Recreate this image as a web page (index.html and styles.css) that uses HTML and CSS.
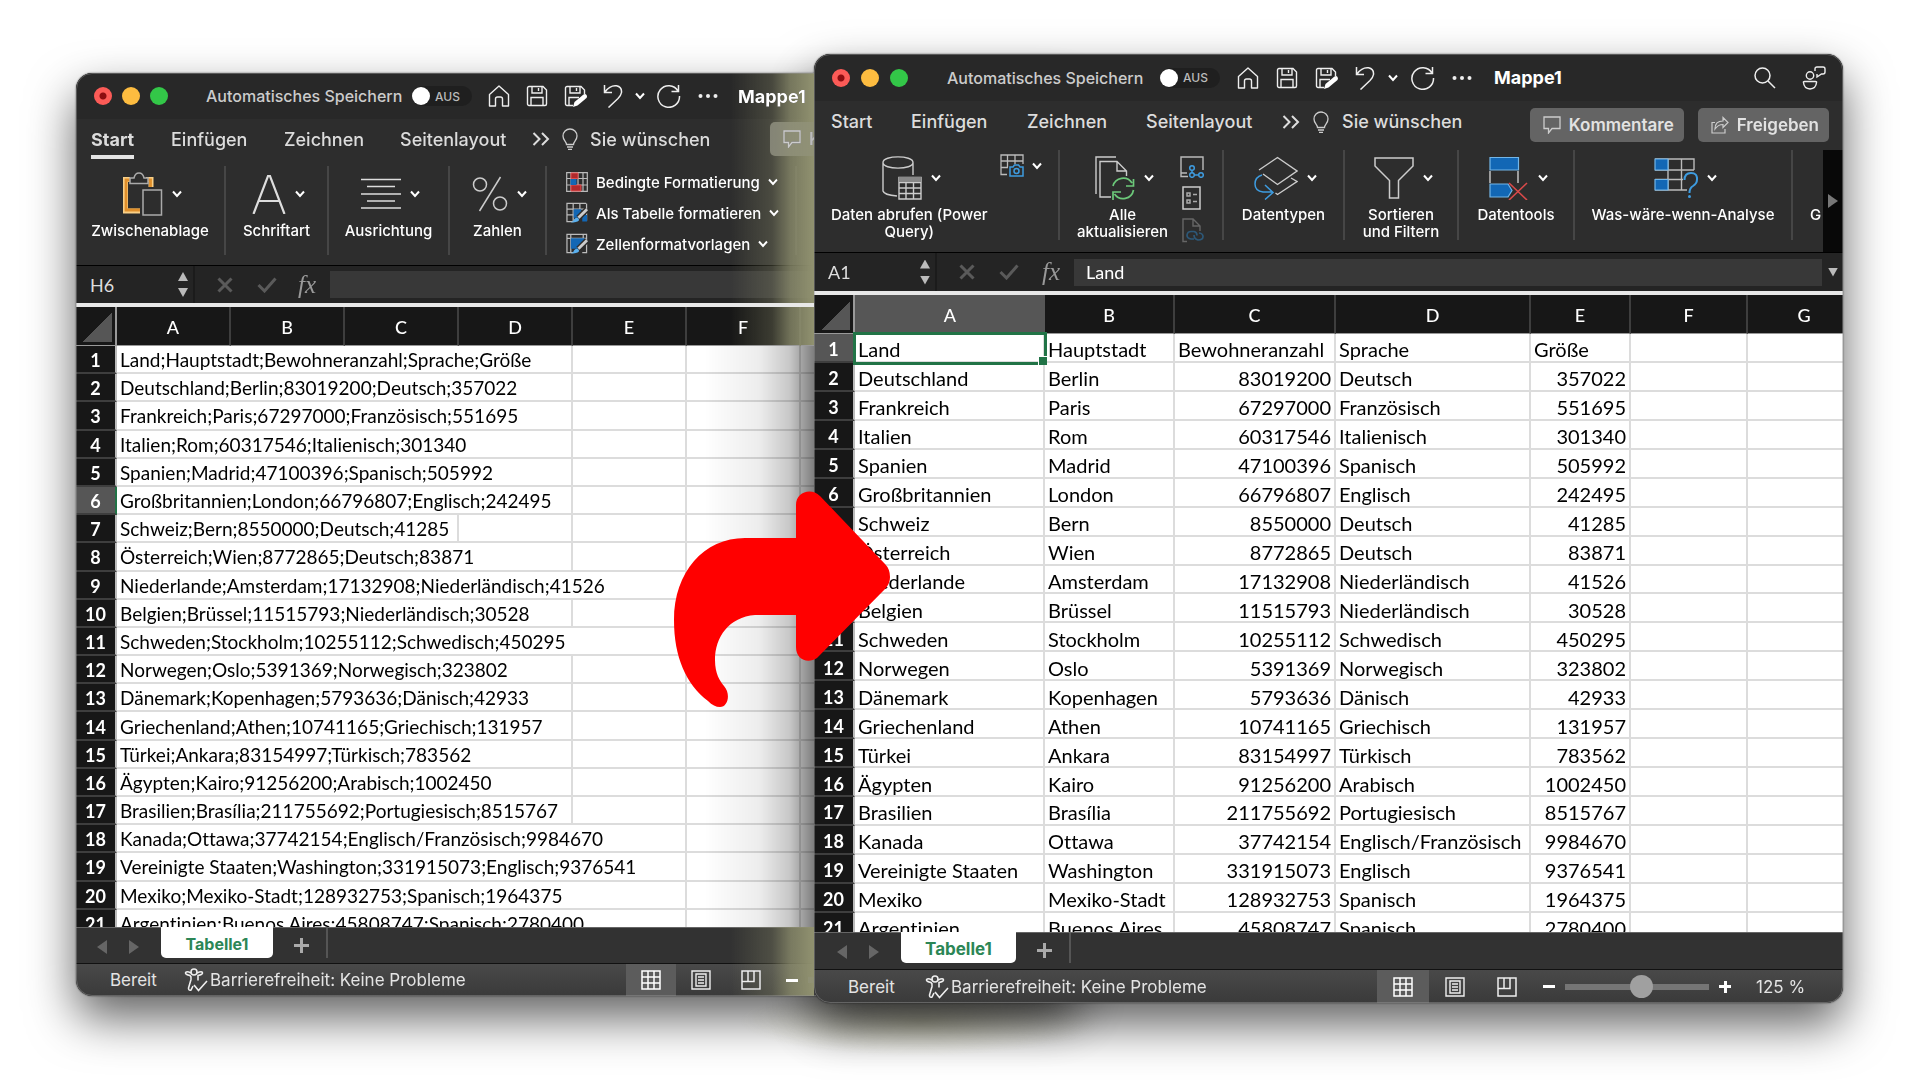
FILE: index.html
```html
<!DOCTYPE html>
<html lang="de">
<head>
<meta charset="utf-8">
<title>Mappe1</title>
<link rel="stylesheet" href="styles.css">
</head>
<body>
<svg class="sprite" aria-hidden="true">
  <symbol id="chevron" viewBox="0 0 10 8"><path d="M1 1.5l4 4.5 4-4.5" fill="none" stroke="#fff" stroke-width="2"/></symbol>
  <symbol id="home" viewBox="0 0 22 22"><path d="M1.500 9.500L11 1l9.500 8.500V21h-6v-7a2 2 0 0 0-2-2h-3a2 2 0 0 0-2 2v7h-6z" fill="none" stroke="#eee" stroke-width="1.400" stroke-linejoin="round"/></symbol>
  <symbol id="save" viewBox="0 0 22 22"><path d="M3 1.500h14l3.500 3.500v14a1.500 1.500 0 0 1-1.500 1.500H3A1.500 1.500 0 0 1 1.500 19V3A1.500 1.500 0 0 1 3 1.500zM6 1.500V8h10V1.500M5 20.500V12.500h12v8M12.500 3v3" fill="none" stroke="#eee" stroke-width="1.400"/></symbol>
  <symbol id="saveas" viewBox="0 0 24 22"><path d="M9 20.500H3A1.500 1.500 0 0 1 1.500 19V3A1.500 1.500 0 0 1 3 1.500h14L20.500 5v4M6 1.500V8h10V1.500M5 20.500V12.500h10M12.500 3v3" fill="none" stroke="#eee" stroke-width="1.400"/><path d="M9 22l1.500-5 9-7.500q2-1 3 .5t0 3l-9 7.500z" fill="#fff"/></symbol>
  <symbol id="undo" viewBox="0 0 20 24"><path d="M1.500 1v7.500H9M2 8Q7 1 13.500 1.800 19 3 18.500 8.500q-.5 3-3.500 6L5.500 23.500" fill="none" stroke="#eee" stroke-width="1.500"/></symbol>
  <symbol id="redo" viewBox="0 0 24 24"><path d="M21.500 1v6.500H14.500M21 7A10.800 10.800 0 1 0 22.500 12" fill="none" stroke="#eee" stroke-width="1.500"/></symbol>
  <symbol id="dots" viewBox="0 0 20 6"><g fill="#eee"><circle cx="2.500" cy="3" r="2"/><circle cx="10" cy="3" r="2"/><circle cx="17.500" cy="3" r="2"/></g></symbol>
  <symbol id="search" viewBox="0 0 22 22"><circle cx="8.500" cy="8.500" r="7.500" fill="none" stroke="#eee" stroke-width="1.500"/><path d="M14 14l7 7" stroke="#eee" stroke-width="1.500"/></symbol>
  <symbol id="people" viewBox="0 0 24 24"><g fill="none" stroke="#eee" stroke-width="1.400"><circle cx="8" cy="9.500" r="3.700"/><path d="M1.500 16.500q-.5-1 1-1h11q1.500 0 1 1-.5 6-6.500 6.500-6-.5-6.500-6.500zM13 5V3q0-2 2-2h6q2 0 2 2v3q0 2-2 2h-1.500L15 11V8"/></g></symbol>
  <symbol id="more" viewBox="0 0 18 14"><path d="M1.500 1L7.500 7l-6 6M10 1l6 6-6 6" fill="none" stroke="#ddd" stroke-width="2"/></symbol>
  <symbol id="bulb" viewBox="0 0 16 22"><path d="M4.500 16.500c0-3-3.500-4-3.500-8.500a7 7 0 0 1 14 0c0 4.500-3.500 5.500-3.500 8.500zM5 19h6M6 21.300h4" fill="none" stroke="#ccc" stroke-width="1.300"/></symbol>
  <symbol id="comment" viewBox="0 0 18 18"><path d="M1 1h16v11.500H9L5.500 17v-4.500H1z" fill="none" stroke="#ccc" stroke-width="1.300"/></symbol>
  <symbol id="share" viewBox="0 0 18 18"><path d="M4 6.500H1V17h13v-4M4 13q0-8 8-8V1.500l5 5-5 5V8.500q-5 0-8 4.500z" fill="none" stroke="#ccc" stroke-width="1.200"/></symbol>
  <symbol id="paste" viewBox="0 0 40 44"><path d="M7 7.500H2.500V39H17M23 7.500h5V15" fill="none" stroke="#f9cf86" stroke-width="5"/><path d="M7 8H3V38H17M23 8h4.500V15" fill="none" stroke="#e08f2b" stroke-width="2.800"/><path d="M7 11.500V6h4q1-5 5-5t5 5h4v5.500zM20 18h18.500v25H20z" fill="#2d2d2d" stroke="#aaa" stroke-width="1.500"/></symbol>
  <symbol id="font" viewBox="0 0 34 40"><path d="M1.500 40L16 2h2L32.500 40M6 27h22" fill="none" stroke="#ddd" stroke-width="2.200"/></symbol>
  <symbol id="align" viewBox="0 0 40 32"><path d="M0 1.500h40M6 8.500h28M0 16h40M6 23h28M0 30h40" stroke="#ddd" stroke-width="1.500"/></symbol>
  <symbol id="percent" viewBox="0 0 36 36"><g fill="none" stroke="#ccc" stroke-width="1.500"><circle cx="8" cy="8.500" r="6.500"/><circle cx="28" cy="27.500" r="6.500"/><path d="M28.500 1L7.500 35"/></g></symbol>
  <symbol id="cond" viewBox="0 0 22 20"><path d="M.7.700h20.600v18.600H.7zM.7 6.500h20.600M.7 13h20.600M5 .7v18.600M12 .7v18.600M17 .7v18.600" fill="none" stroke="#bbb" stroke-width="1.200"/><path d="M5 1h7v5.500H5zM5 13h10v6H5z" fill="#b0292c" stroke="#e05050"/><path d="M4.500 7h6v6h-6z" fill="#1267b5"/></symbol>
  <symbol id="tablefmt" viewBox="0 0 23 22"><path d="M21 1H1v19h7M1 7h20M1 13h9M7.500 1v19M14.500 1v6M21.500 1v18" fill="none" stroke="#bbb" stroke-width="1.300"/><path d="M8 7h8v9H8zM17 13h5v7h-5z" fill="#1267b5"/><path d="M22 7l-9 9" stroke="#2d2d2d" stroke-width="6"/><path d="M22 7l-9 9" stroke="#ccc" stroke-width="3"/><path d="M5 21q3-1 3.500-3.500 2-3 5-.5 1.500 4-8.500 4z" fill="#5ab0ee"/></symbol>
  <symbol id="cellfmt" viewBox="0 0 23 22"><path d="M8 20H1V1h20.500v19H17M1 5h20M5 1v19M18 1v4" fill="none" stroke="#bbb" stroke-width="1.300"/><path d="M5 5h15L13 16H5z" fill="#1267b5"/><path d="M22 7l-9 9" stroke="#2d2d2d" stroke-width="6"/><path d="M22 7l-9 9" stroke="#ccc" stroke-width="3"/><path d="M5 21q3-1 3.500-3.500 2-3 5-.5 1.500 4-8.500 4z" fill="#5ab0ee"/></symbol>
  <symbol id="database" viewBox="0 0 40 44"><path d="M31 19V6.500M1 6.500V35q1 4 14 5M1 6.500C1-1 31-1 31 6.500S1 14 1 6.500z" fill="none" stroke="#ccc" stroke-width="1.400"/><path d="M17 21.500h22V43H17zM17 26.500h22M17 32h22M17 37.500h22M24 26v17M31.500 26v17" fill="none" stroke="#ccc" stroke-width="1.400"/><path d="M17 21h22v5H17z" fill="#888"/></symbol>
  <symbol id="camera" viewBox="0 0 24 23"><path d="M7 20.500H1V1h22v9M1 7h22M1 13.500h7M7.500 1v12M15 1v9" fill="none" stroke="#bbb" stroke-width="1.300"/><path d="M10 13h3l1.500-2h4l1.500 2h3v9H10z" fill="#2d2d2d" stroke="#3e9ce0" stroke-width="1.500"/><circle cx="16.500" cy="17" r="2.500" fill="none" stroke="#3e9ce0" stroke-width="1.500"/></symbol>
  <symbol id="refresh" viewBox="0 0 40 45"><path d="M1 38V1h20M16 41H5V5.500h17L31.500 15v5M22 5.500V15h9.500" fill="none" stroke="#ccc" stroke-width="1.400"/><path d="M18 30a10.500 10.500 0 0 1 19-3M38.500 23v7H31M38.500 34a10.500 10.500 0 0 1-19 4M18 44v-8h8" fill="none" stroke="#6cc97a" stroke-width="1.700"/></symbol>
  <symbol id="flow" viewBox="0 0 24 22"><path d="M8 20.500H1V1h22v13M1 17h6" fill="none" stroke="#bbb" stroke-width="1.400"/><g fill="none" stroke="#3e9ce0" stroke-width="1.500"><circle cx="12" cy="12" r="2.300"/><circle cx="12" cy="19" r="2.300"/><circle cx="21" cy="19" r="2.300"/><path d="M12 14v3M14 19h4.500"/></g></symbol>
  <symbol id="props" viewBox="0 0 24 24"><path d="M3 1h17v22H3z" fill="none" stroke="#ccc" stroke-width="1.500"/><path d="M7 7h3v3H7zM7 14h3v3H7zM13 8.500h4M13 15.500h4" fill="none" stroke="#aaa" stroke-width="1.500"/></symbol>
  <symbol id="linkdoc" viewBox="0 0 24 25"><path d="M7 23.500H3V1h10l7 7v5M13 1v7h7" fill="none" stroke="#666" stroke-width="1.400"/><path d="M14 21h-3q-4-.5-4-4 .5-3.500 4-3.500h3q3 .5 3 4M14 17q0 4 4 5 5 0 5-3.500 0-3-4-3.500M14 17" fill="none" stroke="#2d5878" stroke-width="1.700"/></symbol>
  <symbol id="types" viewBox="0 0 44 44"><path d="M5 14L23.500 1.500 43 15 23.500 28.500 9 18M37 22l6 3.500L23.500 38.500l-2-1.500" fill="none" stroke="#ccc" stroke-width="1.400"/><path d="M8 19Q1 21 1 28t8 8h9M11 29l8 7.500-8 7" fill="none" stroke="#3e9ce0" stroke-width="1.500"/></symbol>
  <symbol id="filter" viewBox="0 0 40 42"><path d="M1 1h38v8L24.500 23.500V41h-9V23.500L1 9z" fill="none" stroke="#ccc" stroke-width="1.500"/></symbol>
  <symbol id="tools" viewBox="0 0 40 44"><path d="M1 15v12M29 15v12" stroke="#ccc" stroke-width="1.400"/><path d="M1 1.500h28.500V14H1zM1 28h18l4 6.500L19 41H1z" fill="#1267b5" stroke="#73b6e8" stroke-width="1.200"/><path d="M20 27l18 17M38 27L20 44" stroke="#d94a4a" stroke-width="1.600"/></symbol>
  <symbol id="whatif" viewBox="0 0 44 40"><path d="M1 1h39v11M1 12h39M1 21.500h28M1 32h32M14 1v31M27.500 1v31" fill="none" stroke="#bbb" stroke-width="1.400"/><path d="M1 1h13v11H1zM1 21.500h13V32H1z" fill="#1267b5" stroke="#73b6e8" stroke-width="1.200"/><path d="M30.500 22q0-7 6.500-7t6 6.500q0 4-4 6.500-3.500 2-3.500 7" fill="none" stroke="#3e9ce0" stroke-width="2"/><circle cx="35.500" cy="38.500" r="1.500" fill="#3e9ce0"/></symbol>
  <symbol id="cancel" viewBox="0 0 16 16"><path d="M1.500 1.500l13 13M14.500 1.500l-13 13" stroke="#5a5a5a" stroke-width="3"/></symbol>
  <symbol id="check" viewBox="0 0 20 16"><path d="M1.500 8l6 6L18.500 1.500" fill="none" stroke="#5a5a5a" stroke-width="3"/></symbol>
  <symbol id="access" viewBox="0 0 24 24"><g fill="none" stroke="#eee" stroke-width="1.600"><circle cx="10" cy="4" r="3"/><path d="M7 5Q2 2.500 1.500 5q0 1.500 4.500 2.500 1.500 1 1 4L4.500 20q0 3 2.500 2l2-4M13 5q5.500-2.500 5.500 0 0 1.500-4.500 2.500v5M10 17l4.500 5.500L23 13"/></g></symbol>
  <symbol id="vgrid" viewBox="0 0 20 20"><path d="M1 1h18v18H1zM1 7h18M1 13h18M7 1v18M13 1v18" fill="none" stroke="#fff" stroke-width="1.500"/></symbol>
  <symbol id="vpage" viewBox="0 0 20 20"><path d="M1 1h18v18H1zM5 4h10v12H5zM7 7h6M7 10h6M7 13h6" fill="none" stroke="#eee" stroke-width="1.400"/></symbol>
  <symbol id="vbreak" viewBox="0 0 20 20"><path d="M1 1h18v18H1zM1 11.500h12V1M7 1v10.500" fill="none" stroke="#eee" stroke-width="1.500"/></symbol>
</svg>

<main class="desktop">
  <section class="window window-source" aria-label="Mappe1, CSV-Text">
    <div class="frame">
      <header class="titlebar">
        <div class="lights"><i class="red"></i><i class="yellow"></i><i class="green"></i></div>
        <label for="auto1">Automatisches Speichern</label>
        <div class="toggle"><input type="checkbox" id="auto1"><span>AUS</span></div>
        <button aria-label="Start"><svg width="22" height="22"><use href="#home"/></svg></button>
        <button aria-label="Speichern"><svg width="22" height="22"><use href="#save"/></svg></button>
        <button aria-label="Speichern unter"><svg width="24" height="22"><use href="#saveas"/></svg></button>
        <button aria-label="Rückgängig"><svg width="20" height="24"><use href="#undo"/></svg></button>
        <button aria-label="Verlauf"><svg width="10" height="8"><use href="#chevron"/></svg></button>
        <button aria-label="Wiederholen"><svg width="24" height="24"><use href="#redo"/></svg></button>
        <button aria-label="Mehr"><svg width="20" height="6"><use href="#dots"/></svg></button>
        <h1>Mappe1</h1>
      </header>
      <nav class="tabs">
        <a href="#start" class="current">Start</a><a href="#einfuegen">Einfügen</a><a href="#zeichnen">Zeichnen</a><a href="#layout">Seitenlayout</a>
        <button aria-label="Weitere Register"><svg width="18" height="14"><use href="#more"/></svg></button>
        <svg width="16" height="22"><use href="#bulb"/></svg><a href="#hilfe">Sie wünschen</a>
        <div class="actions"><button class="pill"><svg width="18" height="18"><use href="#comment"/></svg>Kommentare</button></div>
      </nav>
      <div class="ribbon">
        <button class="group"><span class="pic"><svg width="40" height="44"><use href="#paste"/></svg><svg width="10" height="8"><use href="#chevron"/></svg></span>Zwischenablage</button>
        <button class="group"><span class="pic"><svg width="34" height="40"><use href="#font"/></svg><svg width="10" height="8"><use href="#chevron"/></svg></span>Schriftart</button>
        <button class="group"><span class="pic"><svg width="40" height="32"><use href="#align"/></svg><svg width="10" height="8"><use href="#chevron"/></svg></span>Ausrichtung</button>
        <button class="group"><span class="pic"><svg width="36" height="36"><use href="#percent"/></svg><svg width="10" height="8"><use href="#chevron"/></svg></span>Zahlen</button>
        <div class="styles">
          <button><svg width="22" height="20"><use href="#cond"/></svg>Bedingte Formatierung<svg width="10" height="8"><use href="#chevron"/></svg></button>
          <button><svg width="22" height="22"><use href="#tablefmt"/></svg>Als Tabelle formatieren<svg width="10" height="8"><use href="#chevron"/></svg></button>
          <button><svg width="22" height="22"><use href="#cellfmt"/></svg>Zellenformatvorlagen<svg width="10" height="8"><use href="#chevron"/></svg></button>
        </div>
      </div>
      <div class="formula">
        <div class="namebox"><input aria-label="Namenfeld" value="H6"><span class="stepper"><i class="up"></i><i class="down"></i></span></div>
        <svg width="16" height="16"><use href="#cancel"/></svg><svg width="20" height="16"><use href="#check"/></svg><em>fx</em>
        <input class="entry" aria-label="Formel" value="">
      </div>
      <div class="sheet">
        <table>
          <colgroup><col class="c-head"><col class="c-std"><col class="c-std"><col class="c-std"><col class="c-std"><col class="c-std"><col class="c-std"><col></colgroup>
          <thead><tr><th class="corner"></th><th>A</th><th>B</th><th>C</th><th>D</th><th>E</th><th>F</th><th></th></tr></thead>
          <tbody>
            <tr><th>1</th><td colspan="4">Land;Hauptstadt;Bewohneranzahl;Sprache;Größe</td><td></td><td></td><td></td></tr>
            <tr><th>2</th><td colspan="4">Deutschland;Berlin;83019200;Deutsch;357022</td><td></td><td></td><td></td></tr>
            <tr><th>3</th><td colspan="4">Frankreich;Paris;67297000;Französisch;551695</td><td></td><td></td><td></td></tr>
            <tr><th>4</th><td colspan="4">Italien;Rom;60317546;Italienisch;301340</td><td></td><td></td><td></td></tr>
            <tr><th>5</th><td colspan="4">Spanien;Madrid;47100396;Spanisch;505992</td><td></td><td></td><td></td></tr>
            <tr class="active"><th>6</th><td colspan="4">Großbritannien;London;66796807;Englisch;242495</td><td></td><td></td><td></td></tr>
            <tr><th>7</th><td colspan="3">Schweiz;Bern;8550000;Deutsch;41285</td><td></td><td></td><td></td><td></td></tr>
            <tr><th>8</th><td colspan="4">Österreich;Wien;8772865;Deutsch;83871</td><td></td><td></td><td></td></tr>
            <tr><th>9</th><td colspan="5">Niederlande;Amsterdam;17132908;Niederländisch;41526</td><td></td><td></td></tr>
            <tr><th>10</th><td colspan="4">Belgien;Brüssel;11515793;Niederländisch;30528</td><td></td><td></td><td></td></tr>
            <tr><th>11</th><td colspan="5">Schweden;Stockholm;10255112;Schwedisch;450295</td><td></td><td></td></tr>
            <tr><th>12</th><td colspan="4">Norwegen;Oslo;5391369;Norwegisch;323802</td><td></td><td></td><td></td></tr>
            <tr><th>13</th><td colspan="4">Dänemark;Kopenhagen;5793636;Dänisch;42933</td><td></td><td></td><td></td></tr>
            <tr><th>14</th><td colspan="4">Griechenland;Athen;10741165;Griechisch;131957</td><td></td><td></td><td></td></tr>
            <tr><th>15</th><td colspan="4">Türkei;Ankara;83154997;Türkisch;783562</td><td></td><td></td><td></td></tr>
            <tr><th>16</th><td colspan="4">Ägypten;Kairo;91256200;Arabisch;1002450</td><td></td><td></td><td></td></tr>
            <tr><th>17</th><td colspan="4">Brasilien;Brasília;211755692;Portugiesisch;8515767</td><td></td><td></td><td></td></tr>
            <tr><th>18</th><td colspan="5">Kanada;Ottawa;37742154;Englisch/Französisch;9984670</td><td></td><td></td></tr>
            <tr><th>19</th><td colspan="5">Vereinigte Staaten;Washington;331915073;Englisch;9376541</td><td></td><td></td></tr>
            <tr><th>20</th><td colspan="5">Mexiko;Mexiko-Stadt;128932753;Spanisch;1964375</td><td></td><td></td></tr>
            <tr><th>21</th><td colspan="5">Argentinien;Buenos Aires;45808747;Spanisch;2780400</td><td></td><td></td></tr>
          </tbody>
        </table>
      </div>
      <div class="sheetbar"><i class="prev"></i><i class="next"></i><a href="#tabelle1">Tabelle1</a><button aria-label="Neues Blatt"></button></div>
      <footer class="status">
        <span class="ready">Bereit</span><svg width="24" height="24"><use href="#access"/></svg><span>Barrierefreiheit: Keine Probleme</span>
        <div class="views">
          <button class="on" aria-label="Normal"><svg width="20" height="20"><use href="#vgrid"/></svg></button><button aria-label="Seitenlayout"><svg width="20" height="20"><use href="#vpage"/></svg></button><button aria-label="Umbruch"><svg width="20" height="20"><use href="#vbreak"/></svg></button>
        </div>
        <button class="minus" aria-label="Verkleinern"></button><input type="range" aria-label="Zoom" min="0" max="100" value="54">
      </footer>
      <div class="glow"></div>
    </div>
  </section>

  <div class="haze"></div>

  <section class="window window-result" aria-label="Mappe1, Tabelle">
    <div class="frame">
      <header class="titlebar">
        <div class="lights"><i class="red"></i><i class="yellow"></i><i class="green"></i></div>
        <label for="auto2">Automatisches Speichern</label>
        <div class="toggle"><input type="checkbox" id="auto2"><span>AUS</span></div>
        <button aria-label="Start"><svg width="22" height="22"><use href="#home"/></svg></button>
        <button aria-label="Speichern"><svg width="22" height="22"><use href="#save"/></svg></button>
        <button aria-label="Speichern unter"><svg width="24" height="22"><use href="#saveas"/></svg></button>
        <button aria-label="Rückgängig"><svg width="20" height="24"><use href="#undo"/></svg></button>
        <button aria-label="Verlauf"><svg width="10" height="8"><use href="#chevron"/></svg></button>
        <button aria-label="Wiederholen"><svg width="24" height="24"><use href="#redo"/></svg></button>
        <button aria-label="Mehr"><svg width="20" height="6"><use href="#dots"/></svg></button>
        <h1>Mappe1</h1>
        <button aria-label="Suchen"><svg width="22" height="22"><use href="#search"/></svg></button>
        <button aria-label="Teilen"><svg width="24" height="24"><use href="#people"/></svg></button>
      </header>
      <nav class="tabs">
        <a href="#start">Start</a><a href="#einfuegen">Einfügen</a><a href="#zeichnen">Zeichnen</a><a href="#layout">Seitenlayout</a>
        <button aria-label="Weitere Register"><svg width="18" height="14"><use href="#more"/></svg></button>
        <svg width="16" height="22"><use href="#bulb"/></svg><a href="#hilfe">Sie wünschen</a>
        <div class="actions"><button class="pill"><svg width="18" height="18"><use href="#comment"/></svg>Kommentare</button><button class="pill"><svg width="18" height="18"><use href="#share"/></svg>Freigeben</button></div>
      </nav>
      <div class="ribbon">
        <div class="group pair">
          <button><span class="pic"><svg width="40" height="44"><use href="#database"/></svg><svg width="10" height="8"><use href="#chevron"/></svg></span>Daten abrufen (Power<br>Query)</button>
          <button class="mini" aria-label="Bild"><svg width="24" height="23"><use href="#camera"/></svg><svg width="10" height="8"><use href="#chevron"/></svg></button>
        </div>
        <div class="group pair">
          <button><span class="pic"><svg width="40" height="45"><use href="#refresh"/></svg><svg width="10" height="8"><use href="#chevron"/></svg></span>Alle<br>aktualisieren</button>
          <div class="stack">
            <button aria-label="Abfragen"><svg width="24" height="22"><use href="#flow"/></svg></button>
            <button aria-label="Eigenschaften"><svg width="24" height="24"><use href="#props"/></svg></button>
            <button aria-label="Verknüpfungen"><svg width="24" height="25"><use href="#linkdoc"/></svg></button>
          </div>
        </div>
        <button class="group"><span class="pic"><svg width="44" height="44"><use href="#types"/></svg><svg width="10" height="8"><use href="#chevron"/></svg></span>Datentypen</button>
        <button class="group"><span class="pic"><svg width="40" height="42"><use href="#filter"/></svg><svg width="10" height="8"><use href="#chevron"/></svg></span>Sortieren<br>und Filtern</button>
        <button class="group"><span class="pic"><svg width="40" height="44"><use href="#tools"/></svg><svg width="10" height="8"><use href="#chevron"/></svg></span>Datentools</button>
        <button class="group"><span class="pic"><svg width="44" height="40"><use href="#whatif"/></svg><svg width="10" height="8"><use href="#chevron"/></svg></span>Was-wäre-wenn-Analyse</button>
        <div class="cut"><span class="pic"></span>G</div>
        <button class="scroll" aria-label="Weiter"><i class="next"></i></button>
      </div>
      <div class="formula">
        <div class="namebox"><input aria-label="Namenfeld" value="A1"><span class="stepper"><i class="up"></i><i class="down"></i></span></div>
        <svg width="16" height="16"><use href="#cancel"/></svg><svg width="20" height="16"><use href="#check"/></svg><em>fx</em>
        <input class="entry" aria-label="Formel" value="Land">
        <i class="down"></i>
      </div>
      <div class="sheet">
        <table>
          <colgroup><col class="c-head"><col class="c-land"><col class="c-city"><col class="c-pop"><col class="c-lang"><col class="c-size"><col class="c-f"><col></colgroup>
          <thead><tr><th class="corner"></th><th class="sel">A</th><th>B</th><th>C</th><th>D</th><th>E</th><th>F</th><th class="last">G</th></tr></thead>
          <tbody>
            <tr class="active"><th>1</th><td class="cursor">Land</td><td>Hauptstadt</td><td class="text">Bewohneranzahl</td><td>Sprache</td><td class="text">Größe</td><td></td><td></td></tr>
            <tr><th>2</th><td>Deutschland</td><td>Berlin</td><td>83019200</td><td>Deutsch</td><td>357022</td><td></td><td></td></tr>
            <tr><th>3</th><td>Frankreich</td><td>Paris</td><td>67297000</td><td>Französisch</td><td>551695</td><td></td><td></td></tr>
            <tr><th>4</th><td>Italien</td><td>Rom</td><td>60317546</td><td>Italienisch</td><td>301340</td><td></td><td></td></tr>
            <tr><th>5</th><td>Spanien</td><td>Madrid</td><td>47100396</td><td>Spanisch</td><td>505992</td><td></td><td></td></tr>
            <tr><th>6</th><td>Großbritannien</td><td>London</td><td>66796807</td><td>Englisch</td><td>242495</td><td></td><td></td></tr>
            <tr><th>7</th><td>Schweiz</td><td>Bern</td><td>8550000</td><td>Deutsch</td><td>41285</td><td></td><td></td></tr>
            <tr><th>8</th><td>Österreich</td><td>Wien</td><td>8772865</td><td>Deutsch</td><td>83871</td><td></td><td></td></tr>
            <tr><th>9</th><td>Niederlande</td><td>Amsterdam</td><td>17132908</td><td>Niederländisch</td><td>41526</td><td></td><td></td></tr>
            <tr><th>10</th><td>Belgien</td><td>Brüssel</td><td>11515793</td><td>Niederländisch</td><td>30528</td><td></td><td></td></tr>
            <tr><th>11</th><td>Schweden</td><td>Stockholm</td><td>10255112</td><td>Schwedisch</td><td>450295</td><td></td><td></td></tr>
            <tr><th>12</th><td>Norwegen</td><td>Oslo</td><td>5391369</td><td>Norwegisch</td><td>323802</td><td></td><td></td></tr>
            <tr><th>13</th><td>Dänemark</td><td>Kopenhagen</td><td>5793636</td><td>Dänisch</td><td>42933</td><td></td><td></td></tr>
            <tr><th>14</th><td>Griechenland</td><td>Athen</td><td>10741165</td><td>Griechisch</td><td>131957</td><td></td><td></td></tr>
            <tr><th>15</th><td>Türkei</td><td>Ankara</td><td>83154997</td><td>Türkisch</td><td>783562</td><td></td><td></td></tr>
            <tr><th>16</th><td>Ägypten</td><td>Kairo</td><td>91256200</td><td>Arabisch</td><td>1002450</td><td></td><td></td></tr>
            <tr><th>17</th><td>Brasilien</td><td>Brasília</td><td>211755692</td><td>Portugiesisch</td><td>8515767</td><td></td><td></td></tr>
            <tr><th>18</th><td>Kanada</td><td>Ottawa</td><td>37742154</td><td>Englisch/Französisch</td><td>9984670</td><td></td><td></td></tr>
            <tr><th>19</th><td>Vereinigte Staaten</td><td>Washington</td><td>331915073</td><td>Englisch</td><td>9376541</td><td></td><td></td></tr>
            <tr><th>20</th><td>Mexiko</td><td>Mexiko-Stadt</td><td>128932753</td><td>Spanisch</td><td>1964375</td><td></td><td></td></tr>
            <tr><th>21</th><td>Argentinien</td><td>Buenos Aires</td><td>45808747</td><td>Spanisch</td><td>2780400</td><td></td><td></td></tr>
          </tbody>
        </table>
      </div>
      <div class="sheetbar"><i class="prev"></i><i class="next"></i><a href="#tabelle1">Tabelle1</a><button aria-label="Neues Blatt"></button></div>
      <footer class="status">
        <span class="ready">Bereit</span><svg width="24" height="24"><use href="#access"/></svg><span>Barrierefreiheit: Keine Probleme</span>
        <div class="views">
          <button class="on" aria-label="Normal"><svg width="20" height="20"><use href="#vgrid"/></svg></button><button aria-label="Seitenlayout"><svg width="20" height="20"><use href="#vpage"/></svg></button><button aria-label="Umbruch"><svg width="20" height="20"><use href="#vbreak"/></svg></button>
        </div>
        <button class="minus" aria-label="Verkleinern"></button><input type="range" aria-label="Zoom" min="0" max="100" value="54"><button class="minus plus" aria-label="Vergrößern"></button><output>125 %</output>
      </footer>
    </div>
  </section>

  <svg class="arrow" width="216" height="216" viewBox="0 0 216 216" aria-hidden="true"><path d="M71 46H122V13C122 0 137 -5 146 4L211 72Q216 77 216 85Q216 91 212 96L143 166C134 172 122 168 122 155V123H81C55 125 41 145 41 168C41 182 46 189 50 194C57 202 54 215 46 215C42 215 38 213 34 209C12 192 0 165 0 128C0 80 30 46 71 46Z" fill="#f00"/></svg>
</main>
</body>
</html>
```
FILE: styles.css
```css
* { box-sizing: border-box; }
body { margin: 0; background: #fff; font-family: Inter, "Liberation Sans", sans-serif; color: #fff; }
button { border: 0; background: none; padding: 0; color: inherit; font: inherit; display: flex; align-items: center; }
a { color: inherit; text-decoration: none; }
i { display: block; }
svg { display: block; flex: none; }
.sprite { position: absolute; width: 0; height: 0; }

.desktop { position: relative; min-height: 100vh; overflow: hidden; isolation: isolate; }
.window { position: absolute; border-radius: 16px; }
.window-source { top: 73px; left: 76px; right: 842px; }
.window-result { top: 54px; left: 814px; right: 77px; }
.window::before { content: ""; position: absolute; inset: 0; z-index: -1; border-radius: 16px; box-shadow: 0 0 2px rgba(0,0,0,.6), 0 22px 48px rgba(0,0,0,.62); }
.frame { position: relative; border-radius: 16px; overflow: hidden; background: #2d2d2d; isolation: isolate; }
.frame::after { content: ""; position: absolute; inset: 0; z-index: 3; border-radius: 16px; border: 1px solid rgba(150,150,150,.45); pointer-events: none; }

/* title bar */
.titlebar { display: grid; align-items: center; height: 46px; background: #282828; padding-left: 18px; grid-template-columns: 112px 206px 76px 38px 38px 39px 32px 22px 41px 40px 1fr; }
.window-result .titlebar { height: 47px; grid-template-columns: 115px 213px 77px 39px 39px 40px 33px 23px 41px 42px 1fr 48px 41px; }
.lights { display: flex; gap: 10px; }
.window-result .lights { gap: 11px; }
.lights i { width: 18px; height: 18px; border-radius: 9px; }
.red { background: radial-gradient(circle, #8c0d10 3px, #fc5b57 4px); }
.yellow { background: #fdbc40; }
.green { background: #33c748; }
.titlebar label { font-size: 16px; font-weight: 500; color: #ccc; }
.toggle { display: flex; align-items: center; gap: 5px; width: 60px; height: 20px; border-radius: 10px; background: #1f1f1f; color: #bbb; font-size: 12px; font-weight: 500; }
.toggle input { appearance: none; margin: 0; width: 18px; height: 18px; border-radius: 9px; background: #fff; }
h1 { margin: 0; font-size: 18px; font-weight: 700; }

/* register row */
.tabs { display: grid; align-items: center; height: 36px; margin-bottom: 11px; padding-left: 15px; font-size: 18px; font-weight: 500; color: #dcdcdc; grid-template-columns: 80px 113px 116px 132px 30px 28px 180px 1fr; white-space: nowrap; }
.window-result .tabs { height: 38px; padding: 0 14px 0 17px; grid-template-columns: 80px 116px 119px 136px 31px 29px 1fr auto; }
.tabs .current { justify-self: start; font-weight: 700; line-height: 30px; margin-top: 6px; border-bottom: 4px solid #e4e4e4; }
.actions { display: flex; gap: 14px; }
.pill { height: 34px; padding: 0 10px 0 13px; gap: 8px; border-radius: 5px; background: #646464; color: #e2e2e2; font-size: 17px; font-weight: 600; }
.window-source .pill { background: #7f7f76; color: #bbb; }
.window-result .tabs .actions { padding-top: 7px; }

/* ribbon */
.ribbon { display: grid; height: 100px; padding-bottom: 12px; font-size: 15px; font-weight: 500; line-height: 17px; border-bottom: 1px solid #000; grid-template-columns: 150px 103px 121px 97px 250px; }
.window-result .ribbon { height: 103px; padding-bottom: 0; grid-template-columns: 246px 164px 121px 114px 116px 218px 1fr 20px; }
.group { flex-direction: column; align-items: center; text-align: center; border-right: 2px solid #464646; white-space: nowrap; }
.window-result .group { height: 90px; }
.ribbon .group { justify-content: flex-start; }
.pic { display: flex; align-items: center; justify-content: center; gap: 9px; height: 56px; padding-left: 4px; }
.pair { display: flex; flex-direction: row; align-items: flex-start; padding-left: 17px; gap: 12px; }
.pair > button { flex-direction: column; }
.pair > .mini { flex-direction: row; gap: 8px; padding-top: 4px; }
.stack { display: flex; flex-direction: column; gap: 8px; padding-top: 6px; }
.cut { overflow: hidden; padding-left: 17px; }
.cut .pic { padding-left: 0; }
.scroll { background: #080808; justify-content: center; }
.styles { display: flex; flex-direction: column; gap: 9px; padding: 5px 0 0 19px; border-right: 2px solid #464646; }
.styles button { height: 22px; gap: 8px; white-space: nowrap; }

/* small triangles */
.next, .prev { width: 10px; height: 14px; background: #777; clip-path: polygon(0 0, 100% 50%, 0 100%); }
.prev { clip-path: polygon(100% 0, 0 50%, 100% 100%); }
.up, .down { width: 10px; height: 9px; background: #bbb; clip-path: polygon(50% 0, 100% 100%, 0 100%); }
.down { clip-path: polygon(0 0, 100% 0, 50% 100%); }

/* formula bar */
.formula { display: grid; align-items: center; height: 37px; background: #242424; grid-template-columns: 141px 40px 41px 32px 1fr; }
.window-result .formula { height: 38px; grid-template-columns: 145px 40px 43px 32px 1fr 15px; }
.formula input { border: 0; padding: 0; background: none; color: #ddd; font: 18px Lato, sans-serif; width: 100%; }
.namebox { display: flex; justify-content: space-between; align-self: stretch; align-items: center; padding: 0 5px 0 14px; margin-right: 22px; border-right: 2px solid #1b1b1b; }
.namebox input { width: 60px; }
.stepper { display: grid; gap: 7px; }
.formula em { font: italic 25px "Liberation Serif", serif; color: #999; }
.formula .entry { height: 27px; background: #383838; padding-left: 12px; color: #fff; }
.window-result .entry { width: calc(100% - 6px); }

/* grid */
.sheet { position: relative; height: 624px; overflow: hidden; border-top: 4px solid #e8e8e8; background: #fff; }
.window-result .sheet { height: 641px; }
table { table-layout: fixed; border-collapse: separate; border-spacing: 0; width: 100%; height: 631px; font: 19px Lato, sans-serif; font-variant-ligatures: none; color: #000; }
.window-result table { height: 647px; width: calc(100% + 19px); font-size: 20px; }
.c-head { width: 41px; } .c-std { width: 114px; }
.c-land { width: 190px; } .c-city { width: 130px; } .c-pop { width: 161px; }
.c-lang { width: 195px; } .c-size { width: 100px; } .c-f { width: 117px; }
thead tr { height: 39px; }
thead th { background: #171717; color: #fff; font-size: 18px; font-weight: 500; border-right: 2px solid #3e3e3e; border-bottom: 1px solid #999; padding: 2px 0 0; }
thead .corner { background: linear-gradient(135deg, transparent 50%, #565656 50%) 7px 6px / 29px 29px no-repeat #171717; border-right-color: #999; }
thead .sel { background: #565656; border-right: 0; }
td, tbody th { padding: 2px 0 0; line-height: 22px; }
.window-result td, .window-result tbody th { padding-top: 4px; }
tbody th { background: #171717; color: #fff; font-size: 18px; font-weight: 700; border-bottom: 2px solid #3e3e3e; border-right: 2px solid #bbb; }
td { padding-left: 3px; white-space: nowrap; border-right: 2px solid #dcdcdc; border-bottom: 2px solid #dcdcdc; }
.active th { background: #565656; border-right-color: #217346; }
.window-result td:nth-child(4), .window-result td:nth-child(6) { text-align: right; padding-right: 3px; }
.window-result td.text { text-align: left; padding-left: 3px; }
.cursor { position: relative; }
.window-result .cursor { outline: 3px solid #217346; outline-offset: -1px; }
.cursor::after { content: ""; position: absolute; right: -4px; bottom: -4px; width: 8px; height: 8px; background: #217346; border: 1px solid #fff; border-width: 1px 0 0 1px; }

/* sheet tabs */
.sheetbar { display: flex; height: 36px; background: #323232; border-top: 1px solid #666; padding-left: 21px; }
.window-result .sheetbar { height: 37px; padding-left: 23px; }
.sheetbar i { margin: 12px 22px 0 0; background: #666; }
.sheetbar a { width: 112px; height: 31px; margin-top: -1px; border-radius: 0 0 5px 5px; background: #fff; color: #2c8656; font-size: 16px; font-weight: 700; line-height: 35px; text-align: center; }
.window-result .sheetbar a { width: 115px; font-size: 17px; }
.sheetbar button { width: 55px; height: 30px; border-right: 2px solid #555; background: linear-gradient(#aaa, #aaa) 21px 16px / 15px 3px no-repeat, linear-gradient(#aaa, #aaa) 27px 10px / 3px 15px no-repeat; }

/* status bar */
.status { display: flex; align-items: center; height: 33px; padding-left: 34px; background: linear-gradient(#494949, #3a3a3a); border-top: 1px solid #111; color: #e4e4e4; font-size: 17px; white-space: nowrap; }
.window-result .status { height: 34px; }
.ready { width: 74px; }
.window-result .ready { width: 77px; }
.status > svg { margin-right: 2px; }
.views { display: flex; margin-left: auto; align-self: stretch; }
.views button { width: 50px; justify-content: center; }
.window-result .views button { width: 52px; }
.views .on { background: #5c5c5c; }
.minus { width: 32px; height: 32px; background: linear-gradient(#fff, #fff) center / 12px 3px no-repeat; }
.plus { background: linear-gradient(#fff, #fff) center / 12px 3px no-repeat, linear-gradient(#fff, #fff) center / 3px 12px no-repeat; }
input[type="range"] { appearance: none; margin: 0; width: 144px; height: 24px; background: linear-gradient(#757575, #757575) center / 100% 6px no-repeat; border-radius: 3px; }
input[type="range"]::-webkit-slider-thumb { appearance: none; width: 23px; height: 23px; border-radius: 12px; background: #a0a0a0; }
.window-source input[type="range"] { margin-right: 126px; }
output { width: 102px; padding-left: 15px; }

/* shade cast on the rear window */
.glow { position: absolute; z-index: 1; inset: 0 264px 0 auto; width: 84px; mix-blend-mode: lighten; background: linear-gradient(90deg, rgba(145,146,112,0), rgba(145,146,112,.3) 50%, rgba(145,146,112,.75) 72%, #919270); }
.window-source .sheet::after { content: ""; position: absolute; top: 39px; bottom: 0; right: 264px; width: 110px; background: linear-gradient(90deg, rgba(0,0,0,0), rgba(0,0,0,.07) 50%, rgba(0,0,0,.22) 78%, rgba(0,0,0,.5)); z-index: 2; }
.haze { position: absolute; left: 740px; top: 986px; width: 360px; height: 70px; background: radial-gradient(closest-side, rgba(170,170,115,.4), rgba(170,170,115,0)); mix-blend-mode: multiply; }

.arrow { position: absolute; left: 674px; top: 492px; overflow: visible; }
```
